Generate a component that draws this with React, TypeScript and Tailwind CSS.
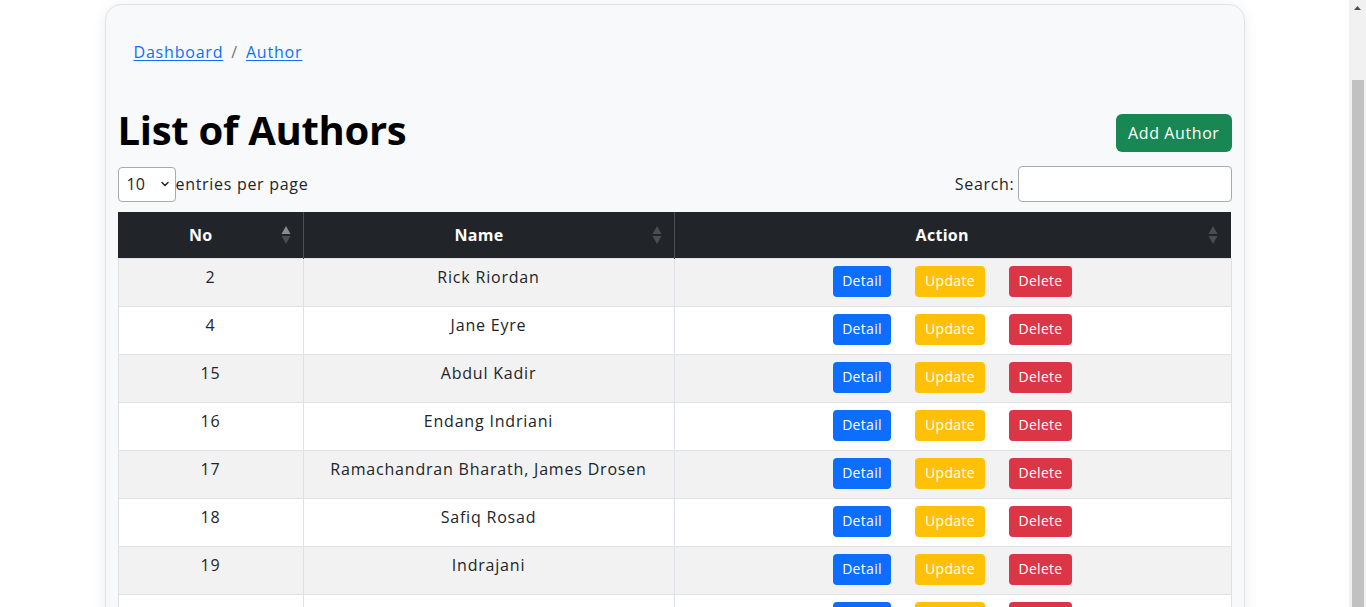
import { ChevronDown } from "lucide-react";

interface Author {
  no: number;
  name: string;
}

const authors: Author[] = [
  { no: 2, name: "Rick Riordan" },
  { no: 4, name: "Jane Eyre" },
  { no: 15, name: "Abdul Kadir" },
  { no: 16, name: "Endang Indriani" },
  { no: 17, name: "Ramachandran Bharath, James Drosen" },
  { no: 18, name: "Safiq Rosad" },
  { no: 19, name: "Indrajani" },
  { no: 20, name: "Tere Liye" },
  { no: 21, name: "Andrea Hirata" },
  { no: 22, name: "Dee Lestari" },
];

function SortIcon({ active }: { active?: boolean }) {
  return (
    <svg width="10" height="20" viewBox="0 0 10 20" className="shrink-0">
      <path d="M5 1 L9.5 9 L0.5 9 Z" fill={active ? "#8a8d90" : "#4a4d51"} />
      <path d="M5 19 L9.5 11 L0.5 11 Z" fill="#4a4d51" />
    </svg>
  );
}

function Scrollbar() {
  return (
    <div className="fixed top-0 right-0 flex h-screen w-[17px] flex-col items-center bg-[#f1f1f1]">
      <svg width="17" height="17" viewBox="0 0 17 17" className="shrink-0">
        <path d="M8.5 6 L12 10 L5 10 Z" fill="#505050" />
      </svg>
      <div className="mt-[63px] w-[12px] flex-1 bg-[#c1c1c1]" />
    </div>
  );
}

export default function App() {
  const font = { fontFamily: "'Open Sans', 'Liberation Sans', sans-serif" };

  return (
    <div className="min-h-screen bg-white pt-1 pr-[17px] pb-10" style={font}>
      <div className="mx-auto w-[1140px] rounded-2xl border border-[#e3e3e3] bg-[#f8f9fa] px-3 pt-[35px] pb-6 shadow-[0_2px_14px_rgba(0,0,0,0.08)]">
        {/* Breadcrumb */}
        <nav className="flex items-center gap-2 pl-[16px] text-base leading-6 tracking-[0.8px] text-[#0d6efd]">
          <a href="#" className="underline underline-offset-2">Dashboard</a>
          <span className="text-[#6c757d]">/</span>
          <a href="#" className="underline underline-offset-2">Author</a>
        </nav>

        {/* Title */}
        <div className="mt-[42px] flex items-end justify-between">
          <h1 className="h-[48px] text-[40px] font-bold leading-[48px] tracking-[-0.3px] text-black">List of Authors</h1>
          <button className="mb-[2px] h-[38px] rounded-md bg-[#198754] px-3 text-base tracking-[0.6px] text-white">Add Author</button>
        </div>

        {/* Controls */}
        <div className="mt-[12px] flex items-center justify-between text-base tracking-[0.7px] text-[#212529]">
          <div className="flex items-center">
            <div className="flex h-[35px] w-[58px] items-center justify-between rounded border border-[#aaa] bg-white pr-[4px] pl-[8px] tracking-normal">
              <span>10</span>
              <ChevronDown className="h-3 w-3" strokeWidth={3} />
            </div>
            <span>entries per page</span>
          </div>
          <div className="flex items-center gap-[3px]">
            <span>Search:</span>
            <div className="h-[36px] w-[214px] rounded border border-[#aaa] bg-white" />
          </div>
        </div>

        {/* Table */}
        <table className="mt-[10px] w-full border-collapse text-base text-[#212529]">
          <thead>
            <tr className="h-[46px] bg-[#212529] text-white">
              <th className="w-[185px] border-r border-[#4b4f54] font-bold tracking-[0.3px]">
                <div className="relative flex justify-center pr-[19px]">
                  No
                  <span className="absolute top-[2px] right-[12px]"><SortIcon active /></span>
                </div>
              </th>
              <th className="w-[371px] border-r border-[#4b4f54] font-bold tracking-[0.3px]">
                <div className="relative flex justify-center pr-[19px]">
                  Name
                  <span className="absolute top-[2px] right-[12px]"><SortIcon /></span>
                </div>
              </th>
              <th className="font-bold tracking-[0.3px]">
                <div className="relative flex justify-center pr-[21px]">
                  Action
                  <span className="absolute top-[2px] right-[13px]"><SortIcon /></span>
                </div>
              </th>
            </tr>
          </thead>
          <tbody>
            {authors.map((a, i) => (
              <tr key={a.no} className={i % 2 === 0 ? "bg-[#f2f2f2]" : "bg-white"}>
                <td className="border border-[#dee2e6] px-2 pt-[6px] pb-[17px] text-center align-top leading-6 tracking-[0.8px]">{a.no}</td>
                <td className="border border-[#dee2e6] px-2 pt-[6px] pb-[17px] text-center align-top leading-6 tracking-[0.8px]">{a.name}</td>
                <td className="border border-[#dee2e6] px-2 pt-[7px] pb-[9px] align-top">
                  <div className="flex justify-center gap-6 text-sm tracking-[0.3px]">
                    <button className="h-[31px] w-[58px] rounded bg-[#0d6efd] text-white">Detail</button>
                    <button className="h-[31px] w-[70px] rounded bg-[#ffc107] text-white">Update</button>
                    <button className="h-[31px] w-[63px] rounded bg-[#dc3545] text-white">Delete</button>
                  </div>
                </td>
              </tr>
            ))}
          </tbody>
        </table>
      </div>
      <Scrollbar />
    </div>
  );
}
